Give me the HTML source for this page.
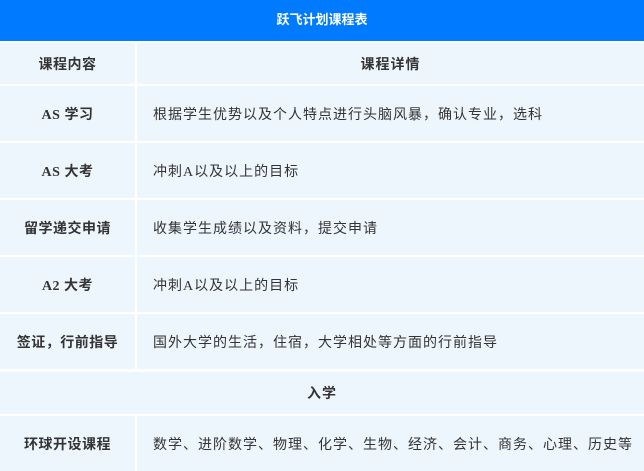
<!DOCTYPE html>
<html><head><meta charset="utf-8"><style>
body{margin:0;width:644px;height:455px;overflow:hidden;background:#fff;font-family:"Liberation Serif","Noto Sans CJK SC",sans-serif;font-size:14px;letter-spacing:1px;color:#333}
.h{position:absolute;left:0;top:0;width:644px;height:41px;background:#007bff;color:#fff;font-weight:bold;text-align:center;line-height:40px;font-size:13px;letter-spacing:0}
.c{position:absolute;background:#eef6fd;display:flex;align-items:center}
.a{left:0;width:135px;justify-content:center;font-weight:bold;letter-spacing:0.5px}
.b{left:137px;width:507px;padding-left:16px;box-sizing:border-box}
.f{left:0;width:644px;justify-content:center;font-weight:bold}
</style></head><body>
<div class="h">跃飞计划课程表</div>
<div class="c a" style="top:43px;height:41px">课程内容</div>
<div class="c b" style="top:43px;height:41px;justify-content:center;padding:0;font-weight:bold">课程详情</div>
<div class="c a" style="top:86px;height:55px">AS 学习</div>
<div class="c b" style="top:86px;height:55px">根据学生优势以及个人特点进行头脑风暴，确认专业，选科</div>
<div class="c a" style="top:143px;height:55px">AS 大考</div>
<div class="c b" style="top:143px;height:55px">冲刺A以及以上的目标</div>
<div class="c a" style="top:200px;height:55px">留学递交申请</div>
<div class="c b" style="top:200px;height:55px">收集学生成绩以及资料，提交申请</div>
<div class="c a" style="top:257px;height:55px">A2 大考</div>
<div class="c b" style="top:257px;height:55px">冲刺A以及以上的目标</div>
<div class="c a" style="top:314px;height:55px">签证，行前指导</div>
<div class="c b" style="top:314px;height:55px">国外大学的生活，住宿，大学相处等方面的行前指导</div>
<div class="c f" style="top:372px;height:42px">入学</div>
<div class="c a" style="top:416px;height:55px">环球开设课程</div>
<div class="c b" style="top:416px;height:55px">数学、进阶数学、物理、化学、生物、经济、会计、商务、心理、历史等</div>
</body></html>
